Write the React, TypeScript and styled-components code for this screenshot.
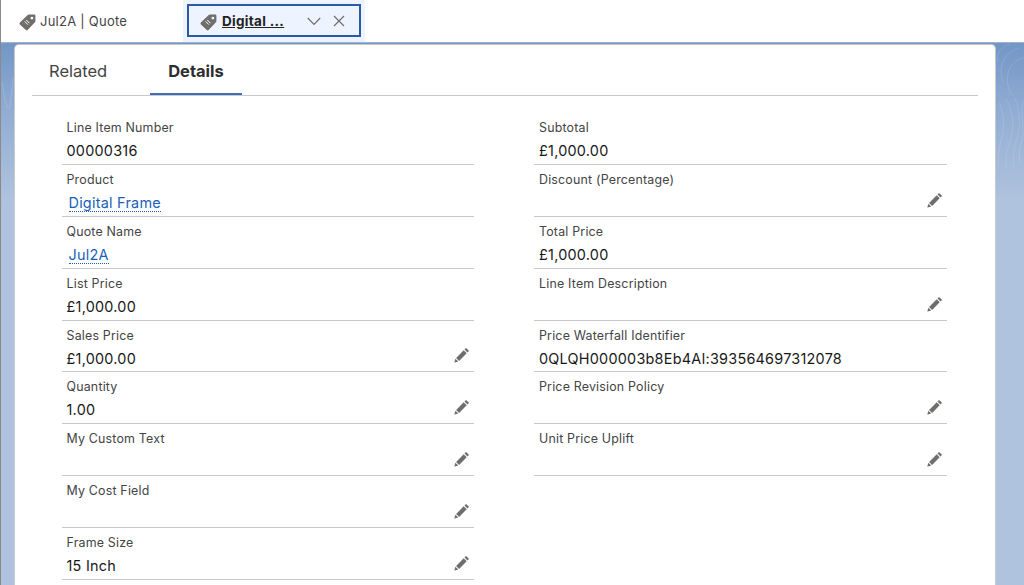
import React from "react";
import styled, { createGlobalStyle } from "styled-components";

const GlobalStyle = createGlobalStyle`
  html, body {
    margin: 0;
    padding: 0;
    background: #fff;
  }
  body {
    font-family: "Inter", "Liberation Sans", sans-serif;
    color: #181818;
  }
`;

type Field = {
  label: string;
  value?: string;
  link?: boolean;
  editable?: boolean;
};

const leftFields: Field[] = [
  { label: "Line Item Number", value: "00000316" },
  { label: "Product", value: "Digital Frame", link: true },
  { label: "Quote Name", value: "Jul2A", link: true },
  { label: "List Price", value: "£1,000.00" },
  { label: "Sales Price", value: "£1,000.00", editable: true },
  { label: "Quantity", value: "1.00", editable: true },
  { label: "My Custom Text", editable: true },
  { label: "My Cost Field", editable: true },
  { label: "Frame Size", value: "15 Inch", editable: true },
];

const rightFields: Field[] = [
  { label: "Subtotal", value: "£1,000.00" },
  { label: "Discount (Percentage)", editable: true },
  { label: "Total Price", value: "£1,000.00" },
  { label: "Line Item Description", editable: true },
  { label: "Price Waterfall Identifier", value: "0QLQH000003b8Eb4AI:393564697312078" },
  { label: "Price Revision Policy", editable: true },
  { label: "Unit Price Uplift", editable: true },
];

const TagSvg = styled.svg`
  flex: none;
  margin-top: 3px;
`;

const TagIcon = () => (
  <TagSvg width="17" height="17" viewBox="0 0 17 17" aria-hidden="true">
    <path
      fill="#6f6e6c"
      fillRule="evenodd"
      d="M9.9.6h5.3c.7 0 1.2.5 1.2 1.2v5.3c0 .5-.2.9-.5 1.2l-7.3 7.8c-.5.5-1.3.5-1.8 0L.9 10.4c-.5-.5-.5-1.3 0-1.8L8.7 1.1c.3-.3.7-.5 1.2-.5zM12.9 2.7a1.4 1.4 0 1 0 0 2.8 1.4 1.4 0 0 0 0-2.8z"
    />
    <path
      stroke="#fff"
      strokeWidth="1"
      strokeLinecap="round"
      d="M5.9 7.6l2.6 2.7M7.5 6.2l2.6 2.7"
    />
  </TagSvg>
);

const PencilIcon = () => (
  <svg width="16" height="16" viewBox="0 0 16 16" aria-hidden="true">
    <path
      fill="#6f6e6c"
      d="M11.7 1.3c.2-.2.5-.2.7 0l2.3 2.3c.2.2.2.5 0 .7l-1.2 1.2-3-3zM9.7 3.3l3 3-7.6 7.6-3-3zM1.4 11.7l2.9 2.9-3.5.9c-.3.1-.5-.1-.4-.4z"
    />
  </svg>
);

const Page = styled.div`
  width: 1024px;
  height: 585px;
  overflow: hidden;
  display: flex;
  flex-direction: column;
  border-left: 1px solid #8a8a8a;
  box-sizing: border-box;
`;

const TabBar = styled.nav`
  flex: 0 0 42px;
  display: flex;
  align-items: stretch;
  background: #fff;
  padding-left: 17px;
  box-sizing: border-box;
`;

const WorkspaceTab = styled.div`
  display: flex;
  align-items: center;
  gap: 4px;
  width: 165px;
  font-size: 13px;
  letter-spacing: 0.25px;
  color: #444;
  padding-left: 1px;
  box-sizing: border-box;
`;

const ActiveTab = styled.div`
  height: 42px;
  padding: 4px;
  box-sizing: border-box;
  background: #eef4ff;
`;

const ActiveTabInner = styled.div`
  width: 174px;
  height: 33px;
  box-sizing: border-box;
  border: 2px solid #2a5ba8;
  display: flex;
  align-items: center;
  padding-left: 11px;
  gap: 5px;
  font-size: 13.5px;
  letter-spacing: 0.3px;
  font-weight: 700;
  color: #222;
`;

const ActiveTitle = styled.span`
  text-decoration: underline;
  flex: 0 0 61px;
  white-space: nowrap;
`;

const ChevronAction = styled.span`
  display: flex;
  margin-left: 17px;
  color: #706e6b;
`;

const CloseAction = styled.span`
  display: flex;
  margin-left: 4px;
  color: #706e6b;
`;

const Backdrop = styled.main`
  position: relative;
  flex: 1;
  padding: 3px 0 0 14px;
  background: linear-gradient(180deg, #7296c6 0, #92add3 70px, #b0c3de 160px, #b0c3de 100%);
  box-shadow: inset 0 1px 0 #9fb3cd;
`;

const RightContours = styled.svg`
  position: absolute;
  top: 0;
  right: 0;
  width: 29px;
  height: 130px;
`;

const LeftContours = styled.svg`
  position: absolute;
  top: 0;
  left: 0;
  width: 14px;
  height: 70px;
`;

const Card = styled.section`
  position: relative;
  width: 980px;
  height: 560px;
  background: #fff;
  border-radius: 4px 4px 0 0;
  box-shadow: 0 0 0 1px #c9c9c9;
  padding: 0 17px;
  box-sizing: border-box;
`;

const TabStrip = styled.div`
  display: flex;
  height: 50px;
  border-bottom: 1px solid #c9c9c9;
  box-sizing: content-box;
`;

const RelatedTab = styled.div`
  display: flex;
  align-items: center;
  width: 118px;
  height: 50px;
  box-sizing: border-box;
  padding: 1px 0 0 17px;
  font-size: 16.5px;
  color: #444;
`;

const DetailsTab = styled.div`
  display: flex;
  align-items: center;
  justify-content: center;
  width: 92px;
  height: 50px;
  box-sizing: border-box;
  padding-top: 4px;
  font-size: 16.5px;
  font-weight: 700;
  color: #2e2e2e;
  border-bottom: 2px solid #3f6fb9;
`;

const Grid = styled.div`
  display: grid;
  grid-template-columns: 412px 413px;
  column-gap: 60px;
  padding: 17px 0 0 30px;
  align-items: start;
`;

const Column = styled.div<{ $inset: number }>`
  display: flex;
  flex-direction: column;

  --inset: ${(p) => p.$inset}px;
`;

const Row = styled.div`
  position: relative;
  height: 51.875px;
  box-sizing: border-box;
  border-bottom: 1px solid #c9c9c9;
  padding: 7px 5px 0 var(--inset);
`;

const Label = styled.div`
  font-size: 12.4px;
  line-height: 16px;
  letter-spacing: 0.2px;
  color: #444;
`;

const Value = styled.div`
  margin-top: 5px;
  font-size: 14.4px;
  line-height: 19px;
  letter-spacing: 0.25px;
  color: #181818;
`;

const LinkValue = styled.span`
  margin-left: 2px;
  color: #1b5fb8;
  border-bottom: 1px dotted #1b5fb8;
`;

const EditButton = styled.span`
  position: absolute;
  right: 4px;
  bottom: 8px;
  display: flex;
`;

const FieldRow = ({ field }: { field: Field }) => (
  <Row>
    <Label>{field.label}</Label>
    <Value>
      {field.link ? <LinkValue>{field.value}</LinkValue> : field.value}
    </Value>
    {field.editable && (
      <EditButton>
        <PencilIcon />
      </EditButton>
    )}
  </Row>
);

export default function App() {
  return (
    <>
      <GlobalStyle />
      <Page>
        <TabBar>
          <WorkspaceTab>
            <TagIcon />
            Jul2A | Quote
          </WorkspaceTab>
          <ActiveTab>
            <ActiveTabInner>
              <TagIcon />
              <ActiveTitle>Digital ...</ActiveTitle>
              <ChevronAction>
                <svg width="16" height="16" viewBox="0 0 16 16" fill="none" stroke="currentColor" strokeWidth="1.2">
                  <path d="M1.8 5l6.2 6.4L14.2 5" />
                </svg>
              </ChevronAction>
              <CloseAction>
                <svg width="16" height="16" viewBox="0 0 16 16" fill="none" stroke="currentColor" strokeWidth="1.2">
                  <path d="M3 3l10 10M13 3L3 13" />
                </svg>
              </CloseAction>
            </ActiveTabInner>
          </ActiveTab>
        </TabBar>
        <Backdrop>
          <LeftContours viewBox="0 0 14 70" fill="none" stroke="#fff" strokeOpacity="0.14">
            <path d="M1 40c2 14 4 24 6 26s3-8 5-30" />
          </LeftContours>
          <RightContours viewBox="0 0 29 130" fill="none" stroke="#fff" strokeOpacity="0.12">
            <path d="M3 20c-3-8 4-16 12-18" />
            <path d="M8 40C2 24 10 10 24 6" />
            <path d="M16 52C8 36 14 18 29 16" />
            <path d="M4 60c4 10 6 22 3 34s-4 20-4 28" />
            <path d="M12 58c5 12 8 24 4 38s-6 18-5 30" />
            <path d="M20 56c5 14 6 26 2 40s-4 18-3 30" />
            <path d="M28 60c-3 14 2 26 -1 38s-3 16-2 24" />
          </RightContours>
          <Card>
            <TabStrip>
              <RelatedTab>Related</RelatedTab>
              <DetailsTab>Details</DetailsTab>
            </TabStrip>
            <Grid>
              <Column $inset={4.5}>
                {leftFields.map((f) => (
                  <FieldRow key={f.label} field={f} />
                ))}
              </Column>
              <Column $inset={5}>
                {rightFields.map((f) => (
                  <FieldRow key={f.label} field={f} />
                ))}
              </Column>
            </Grid>
          </Card>
        </Backdrop>
      </Page>
    </>
  );
}
